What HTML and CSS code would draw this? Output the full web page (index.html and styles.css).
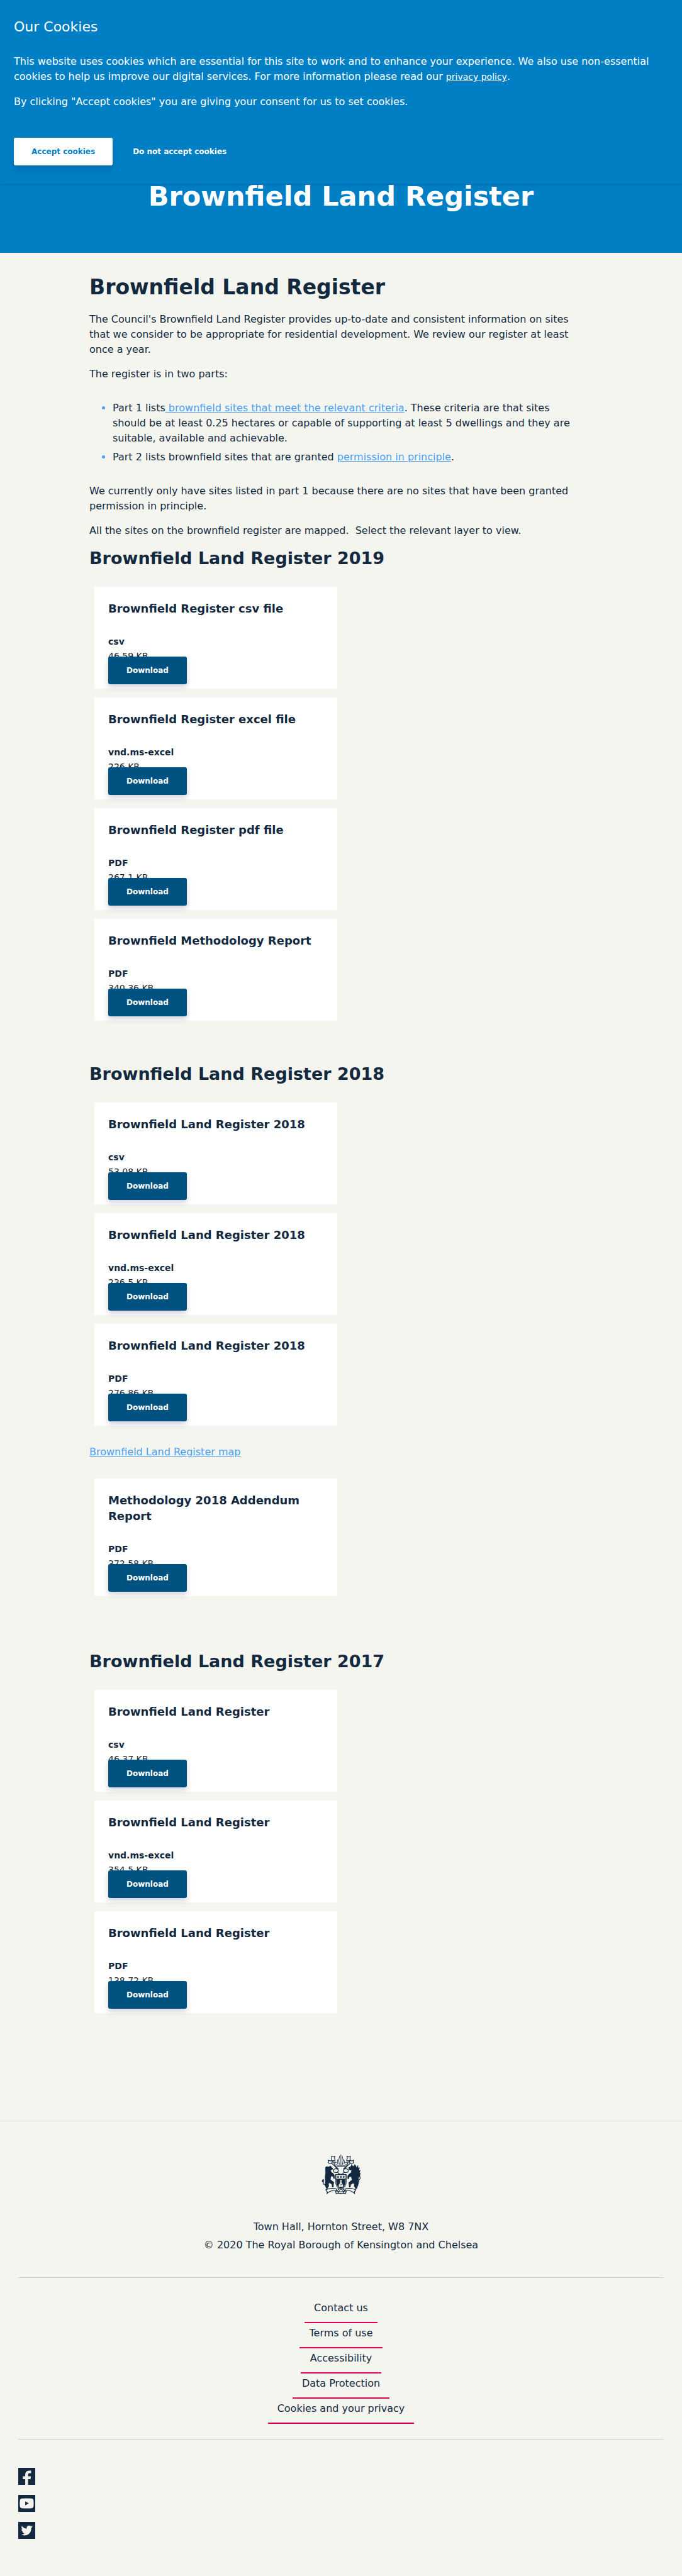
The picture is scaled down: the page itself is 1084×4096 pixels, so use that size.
FILE: index.html
```html
<!DOCTYPE html>
<html lang="en">
<head>
<meta charset="utf-8">
<meta name="viewport" content="width=device-width, initial-scale=1">
<title>Brownfield Land Register</title>
<link rel="stylesheet" href="styles.css">
</head>
<body>
<section class="cookies" aria-label="Cookies">
  <h2 class="cookies-title">Our Cookies</h2>
  <p>This website uses cookies which are essential for this site to work and to enhance your experience. We also use non-essential cookies to help us improve our digital services. For more information please read our <a class="cookies-link" href="#">privacy policy</a>.</p>
  <p>By clicking "Accept cookies" you are giving your consent for us to set cookies.</p>
  <div class="cookies-actions">
    <button class="btn btn-light" type="button">Accept cookies</button>
    <button class="btn btn-plain" type="button">Do not accept cookies</button>
  </div>
</section>

<header class="hero">
  <h1 class="hero-title">Brownfield Land Register</h1>
</header>

<main class="content">
  <h2 class="page-title">Brownfield Land Register</h2>
  <p>The Council's Brownfield Land Register provides up-to-date and consistent information on sites that we consider to be appropriate for residential development. We review our register at least once a year.</p>
  <p>The register is in two parts:</p>
  <ul class="parts">
    <li>Part 1 lists<a href="#"> brownfield sites that meet the relevant criteria</a>. These criteria are that sites should be at least 0.25 hectares or capable of supporting at least 5 dwellings and they are suitable, available and achievable.</li>
    <li>Part 2 lists brownfield sites that are granted <a href="#">permission in principle</a>.</li>
  </ul>
  <p>We currently only have sites listed in part 1 because there are no sites that have been granted permission in principle.</p>
  <p>All the sites on the brownfield register are mapped.&nbsp; Select the relevant layer to view.</p>

  <section class="year">
    <h3 class="year-title">Brownfield Land Register 2019</h3>
    <div class="cards">
      <article class="card"><h4 class="card-title">Brownfield Register csv file</h4><p class="card-type">csv</p><p class="card-size">46.59 KB</p><button class="btn btn-dark" type="button">Download</button></article>
      <article class="card"><h4 class="card-title">Brownfield Register excel file</h4><p class="card-type">vnd.ms-excel</p><p class="card-size">226 KB</p><button class="btn btn-dark" type="button">Download</button></article>
      <article class="card"><h4 class="card-title">Brownfield Register pdf file</h4><p class="card-type">PDF</p><p class="card-size">267.1 KB</p><button class="btn btn-dark" type="button">Download</button></article>
      <article class="card"><h4 class="card-title">Brownfield Methodology Report</h4><p class="card-type">PDF</p><p class="card-size">340.36 KB</p><button class="btn btn-dark" type="button">Download</button></article>
    </div>
  </section>

  <section class="year year-2018">
    <h3 class="year-title">Brownfield Land Register 2018</h3>
    <div class="cards">
      <article class="card"><h4 class="card-title">Brownfield Land Register 2018</h4><p class="card-type">csv</p><p class="card-size">53.08 KB</p><button class="btn btn-dark" type="button">Download</button></article>
      <article class="card"><h4 class="card-title">Brownfield Land Register 2018</h4><p class="card-type">vnd.ms-excel</p><p class="card-size">236.5 KB</p><button class="btn btn-dark" type="button">Download</button></article>
      <article class="card"><h4 class="card-title">Brownfield Land Register 2018</h4><p class="card-type">PDF</p><p class="card-size">276.86 KB</p><button class="btn btn-dark" type="button">Download</button></article>
    </div>
    <p class="map-link"><a href="#">Brownfield Land Register map</a></p>
    <div class="cards">
      <article class="card"><h4 class="card-title">Methodology 2018 Addendum Report</h4><p class="card-type">PDF</p><p class="card-size">372.58 KB</p><button class="btn btn-dark" type="button">Download</button></article>
    </div>
  </section>

  <section class="year year-2017">
    <h3 class="year-title">Brownfield Land Register 2017</h3>
    <div class="cards">
      <article class="card"><h4 class="card-title">Brownfield Land Register</h4><p class="card-type">csv</p><p class="card-size">46.37 KB</p><button class="btn btn-dark" type="button">Download</button></article>
      <article class="card"><h4 class="card-title">Brownfield Land Register</h4><p class="card-type">vnd.ms-excel</p><p class="card-size">354.5 KB</p><button class="btn btn-dark" type="button">Download</button></article>
      <article class="card"><h4 class="card-title">Brownfield Land Register</h4><p class="card-type">PDF</p><p class="card-size">138.72 KB</p><button class="btn btn-dark" type="button">Download</button></article>
    </div>
  </section>
</main>

<footer class="footer">
  <div class="footer-about">
    <svg class="crest" viewBox="78 60 207 212" role="img" aria-label="Coat of arms">
      <g fill="none" stroke="#13293f" stroke-width="4" stroke-linejoin="round">
        <path stroke-width="3" d="M165 114q-6-12 0-26M173 116q-8-24 1-46M181 118V62M189 116q8-24-1-46M197 114q6-12 0-26"/>
        <path stroke-width="3" d="M154 112l8 10h40l8-10M160 124h44"/>
        <path d="M131 71l10 4 8-4-2 12 4 10-10 2-10-2 2-10zM113 92l12 4 9-3 1 12-12 5-10-4 3-8zM135 100l14 2 8 4M131 108l16 14 18 18M142 103l10 20 16 17M143 142l10-5 11 2 4 9-7 10-16-2-3-6z"/>
        <path d="M231 71l-10 4-8-4 2 12-4 10 10 2 10-2-2-10zM249 92l-12 4-9-3-1 12 12 5 10-4-3-8zM227 100l-14 2-8 4M231 108l-16 14-18 18M220 103l-10 20-16 17M219 142l-10-5-11 2-4 9 7 10 16-2 3-6z"/>
        <path d="M163 156l10 10h16l10-10"/>
        <path d="M97 222q-14-2-9-14 6-12-5-11M92 197q-7-5-10 4 0 8 8 8"/>
        <path d="M266 218q14-2 10-15-8-14 2-24 8 0 4 12-8 10-12 20"/>
        <path d="M101 249l8-3q28-8 46-2l8 11q-28-7-51 9l-5 6 2-9zM260 249l-8-3q-28-8-46-2l-8 11q28-7 51 9l5 6-2-9zM151 254l10 3q20 5 40 0l9-3-4 15-8-2q-18 3-34 0l-8 2zM167 258v9M195 258v9"/>
        <path d="M163 243l12 11M199 243l-12 11"/>
      </g>
      <g fill="#13293f">
        <path d="M98 131l5-6 14 1 10-5 4 8 8 5-2 8-10 2 4 12 10 6 6 10 1 18-6 1-3-12-9-2-4 17 11 9 8 6-2 8-1 18h-8l-2-15-12-7-4 5 2 12-6 6 2 6-12 1-3-12-4-6 3-22-2-20 3-22z"/>
        <path d="M264 131l-4-18-3 10-5-10-3 12-8-6-5-8-1 12-15 9 5 12 12 2-3 12-10 7-8 10v16l6 2 4-12 9-1 4 16-10 8-8 8 2 6 1 18h8l2-14 12-8 6 6-2 10 6 8-1 5 12 1 3-14 4-6-3-20 3-20 11-10-4-2 7-14-8 2 5-16-8 2 4-16-8 3-1-16z"/>
        <path d="M151 166h60v40q0 30-30 44-30-14-30-44z"/>
      </g>
      <path d="M156 171h50v19h-50z" fill="#f4f5ef"/>
      <path d="M155 194v13q0 26 26 38 26-12 26-38v-13" fill="none" stroke="#f4f5ef" stroke-width="2"/>
      <g fill="#13293f"><circle cx="166" cy="181" r="5"/><circle cx="181" cy="181" r="5"/><circle cx="196" cy="181" r="5"/></g>
      <path d="M181 196v12M176 202h10M181 207l-10 20h20zM170 231h22M181 210v17" fill="none" stroke="#f4f5ef" stroke-width="4"/>
    </svg>
    <p>Town Hall, Hornton Street, W8 7NX</p>
    <p>© 2020 The Royal Borough of Kensington and Chelsea</p>
  </div>
  <nav class="footer-nav" aria-label="Footer">
    <a href="#">Contact us</a>
    <a href="#">Terms of use</a>
    <a href="#">Accessibility</a>
    <a href="#">Data Protection</a>
    <a href="#">Cookies and your privacy</a>
  </nav>
  <div class="social">
    <a href="#" aria-label="Facebook"><svg viewBox="0 0 90 90"><path fill="#13293f" d="M0 0h90v90H0z"/><path fill="#f4f5ef" d="M37 90V60H24V45h13V36q0-20 20-21h11v13h-9q-7 0-7 8v9h15l-2 15H52v30z"/></svg></a>
    <a href="#" aria-label="YouTube"><svg viewBox="0 0 90 90"><path fill="#13293f" d="M0 0h90v90H0z"/><path fill="#f4f5ef" fill-rule="evenodd" d="M20 19q25-2 50 0 10 1 11 10 2 16 0 32-1 9-11 10-25 2-50 0-10-1-11-10-2-16 0-32 1-9 11-10zM37 34v22l19-11z"/></svg></a>
    <a href="#" aria-label="Twitter"><svg viewBox="0 0 90 90"><path fill="#13293f" d="M0 0h90v90H0z"/><path fill="#f4f5ef" d="M76 25q-3 5-7 7 1 20-13 32-19 13-42 3 11 1 19-6-9-2-12-9h6q-10-4-10-14l6 2q-9-8-4-18 11 13 26 14-2-10 6-15 9-5 17 2l8-3q-1 4-5 7z"/></svg></a>
  </div>
</footer>
</body>
</html>
```
FILE: styles.css
```css
*, *::before, *::after { box-sizing: border-box; }

body {
  margin: 0;
  background: #f4f5ef;
  color: #13293f;
  font: 16px/24px "DejaVu Sans", sans-serif;
}

h1, h2, h3, h4, p, ul { margin: 0; }

a { color: #4a9ef5; }

.btn {
  height: 44px;
  padding: 0 29px;
  border: 0;
  border-radius: 3px;
  font: bold 12px/24px "DejaVu Sans", sans-serif;
  cursor: pointer;
}
.btn-light {
  padding: 0 28px;
  background: #fff;
  color: #007fc5;
  box-shadow: 0 6px 12px rgba(0, 30, 80, .18);
}
.btn-plain { background: transparent; color: #fff; }
.btn-dark {
  display: block;
  position: relative;
  margin-top: -11px;
  background: #005380;
  color: #fff;
  box-shadow: 0 4px 10px rgba(19, 25, 80, .2);
}

.cookies {
  position: relative;
  padding: 30px 22px 29px;
  background: #007fc5;
  color: #fff;
  box-shadow: 0 1px 5px rgba(0, 40, 90, .25);
}
.cookies-title {
  margin-bottom: 30px;
  font-size: 22px;
  line-height: 26px;
  font-weight: normal;
}
.cookies p + p { margin-top: 16px; }
.cookies-link { color: #fff; font-size: 14px; }
.cookies-actions { display: flex; gap: 3px; margin-top: 45px; }

.hero {
  padding-bottom: 70px;
  background: #007fc5;
  color: #fff;
  text-align: center;
}
.hero-title { font-size: 43px; line-height: 40px; }

.content {
  max-width: 800px;
  margin: 0 auto;
  padding: 35px 0 171px;
}
.page-title { margin-bottom: 19px; font-size: 33px; line-height: 40px; }
.content > p, .parts { max-width: 780px; }
.content > p + p { margin-top: 15px; }
.parts { margin: 30px 0; padding-left: 37px; }
.parts li + li { margin-top: 6px; }
.parts li::marker { color: #4a9ef5; }

.year { margin-top: 15px; }
.year-2018 { margin-top: 68px; }
.year-2017 { margin-top: 87px; }
.year-title { margin-bottom: 28px; font-size: 27px; line-height: 34px; }

.cards {
  display: grid;
  gap: 14px;
  max-width: 386px;
  margin-left: 8px;
}
.card { padding: 22px 22px 7px; background: #fff; }
.card-title { margin-bottom: 29px; font-size: 18px; line-height: 25px; }
.card-type, .card-size { font-size: 14px; line-height: 23px; }
.card-type { font-weight: bold; }
.map-link { margin: 30px 0; }

.footer {
  padding: 0 29px 59px;
  border-top: 1px solid #c8cdc9;
}
.footer-about {
  padding: 52px 0 37px;
  border-bottom: 1px solid #c8cdc9;
  line-height: 29px;
  text-align: center;
}
.crest { display: block; width: 62px; height: 64px; margin: 0 auto 37px; }
.footer-nav {
  display: flex;
  flex-direction: column;
  align-items: center;
  gap: 4px;
  padding: 36px 0 24px;
  border-bottom: 1px solid #c8cdc9;
}
.footer-nav a {
  padding: 0 15px 10px;
  border-bottom: 2px solid #e5005b;
  color: #13293f;
  text-decoration: none;
}
.social { display: flex; flex-direction: column; align-items: flex-start; gap: 16px; padding-top: 45px; }
.social a, .social svg { display: block; width: 27px; height: 27px; }
```
